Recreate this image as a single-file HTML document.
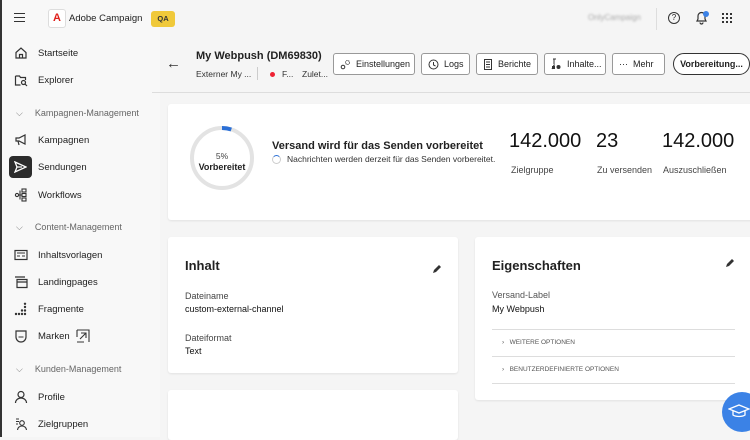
<!DOCTYPE html>
<html><head><meta charset="utf-8"><style>
*{box-sizing:border-box;margin:0;padding:0}
body{width:750px;height:437px;overflow:hidden;background:#f5f5f5;font-family:"Liberation Sans",sans-serif;color:#222;position:relative}
.abs{position:absolute;white-space:nowrap}
.side{left:0;top:0;width:160px;height:437px;background:#f8f8f8;border-left:2px solid #333}
.nav{position:absolute;left:14px;font-size:9.5px;color:#222;display:flex;align-items:center;white-space:nowrap}
.nav svg{width:14px;height:14px;margin-right:10px}
.sec{position:absolute;left:16px;font-size:9px;color:#666;white-space:nowrap}
.sec span{margin-right:12px;color:#777}
.btn{position:absolute;top:53px;height:22px;border:1px solid #999;border-radius:3px;background:#fff;font-size:9px;display:flex;align-items:center;padding:0 6px;gap:5px;white-space:nowrap;overflow:hidden}
.btn svg{flex:none}
.card{position:absolute;background:#fff;border-radius:3px;box-shadow:0 1px 2px rgba(0,0,0,.08)}
.lbl{font-size:9px;color:#444}
.val{font-size:9px;color:#111}
</style></head><body>
<div class="abs side"></div>
<div class="abs" style="left:14px;top:13px;width:11px;height:9px;border-top:1.5px solid #333;border-bottom:1.5px solid #333"><div style="margin-top:2.5px;border-top:1.5px solid #333"></div></div>
<div class="abs" style="left:48px;top:9px;width:18px;height:19px;background:#fff;border:1px solid #ddd;border-radius:3px;color:#e0201b;font-weight:bold;font-size:11px;text-align:center;line-height:17px">A</div>
<div class="abs" style="left:69px;top:13px;font-size:9.5px;color:#222">Adobe Campaign</div>
<div class="abs" style="left:151px;top:11px;width:24px;height:16px;background:#f0c93a;border-radius:3px;font-size:7.5px;text-align:center;line-height:16px;font-weight:bold;color:#333">QA</div>
<div class="abs" style="left:588px;top:13px;font-size:8px;color:#aaa;filter:blur(1px)">OnlyCampaign</div>
<div class="abs" style="left:656px;top:8px;width:1px;height:22px;background:#ddd"></div>
<div class="abs" style="left:668px;top:12px;width:12px;height:12px;border:1.3px solid #333;border-radius:50%;font-size:8px;text-align:center;line-height:10px">?</div>
<svg class="abs" style="left:694px;top:10px" width="16" height="16" viewBox="0 0 16 16"><path d="M3 11h9l-1-2V6a3.5 3.5 0 0 0-7 0v3z M6 12.5a1.5 1.5 0 0 0 3 0" fill="none" stroke="#333" stroke-width="1.2"/><circle cx="12" cy="4" r="3" fill="#3b82e6"/></svg>
<svg class="abs" style="left:722px;top:13px" width="10" height="10"><g fill="#333"><rect x="0" y="0" width="2" height="2"/><rect x="4" y="0" width="2" height="2"/><rect x="8" y="0" width="2" height="2"/><rect x="0" y="4" width="2" height="2"/><rect x="4" y="4" width="2" height="2"/><rect x="8" y="4" width="2" height="2"/><rect x="0" y="8" width="2" height="2"/><rect x="4" y="8" width="2" height="2"/><rect x="8" y="8" width="2" height="2"/></g></svg>
<div class="nav" style="top:46px"><svg viewBox="0 0 14 14"><path d="M2 6.5L7 2l5 4.5V12H2z M5.5 12V8.5h3V12" fill="none" stroke="#333" stroke-width="1.2"/></svg>Startseite</div>
<div class="nav" style="top:73px"><svg viewBox="0 0 14 14"><path d="M1.5 3h4l1 1.5h5V7 M1.5 3v9h5" fill="none" stroke="#333" stroke-width="1.2"/><circle cx="9.5" cy="9.5" r="2" fill="none" stroke="#333" stroke-width="1.2"/><path d="M11 11l2 2" stroke="#333" stroke-width="1.2"/></svg>Explorer</div>
<div class="sec" style="top:108px"><span>⌵</span>Kampagnen-Management</div>
<div class="nav" style="top:133px"><svg viewBox="0 0 14 14"><path d="M2 5h3l6-3v9L5 8H2z M4 8l1 4" fill="none" stroke="#333" stroke-width="1.2"/></svg>Kampagnen</div>
<div class="abs" style="left:9px;top:156px;width:23px;height:22px;background:#2c2c2c;border-radius:4px"></div>
<svg class="abs" style="left:14px;top:161px" width="13" height="12" viewBox="0 0 13 12"><path d="M1 1l11 5-11 5 2-5z M3 6h5" fill="none" stroke="#fff" stroke-width="1.3"/></svg>
<div class="abs" style="left:38px;top:162px;font-size:9.5px">Sendungen</div>
<div class="nav" style="top:188px"><svg viewBox="0 0 14 14"><g fill="none" stroke="#333" stroke-width="1.1"><circle cx="3" cy="7" r="1.6"/><rect x="8" y="1" width="4" height="3"/><rect x="8" y="5.5" width="4" height="3"/><rect x="8" y="10" width="4" height="3"/><path d="M4.6 7H8 M6 2.5v9"/></g></svg>Workflows</div>
<div class="sec" style="top:222px"><span>⌵</span>Content-Management</div>
<div class="nav" style="top:248px"><svg viewBox="0 0 14 14"><rect x="1" y="2.5" width="12" height="9" fill="none" stroke="#333" stroke-width="1.2"/><path d="M3 5h8 M3 8h3 M8 8h3" stroke="#333"/></svg>Inhaltsvorlagen</div>
<div class="nav" style="top:275px"><svg viewBox="0 0 14 14"><path d="M1 2h10 M3 4.5h10v8H3z M3 7h10" fill="none" stroke="#333" stroke-width="1.2"/></svg>Landingpages</div>
<div class="nav" style="top:302px"><svg viewBox="0 0 14 14"><g fill="#333"><circle cx="2" cy="12" r="1.2"/><circle cx="5" cy="12" r="1.2"/><circle cx="8" cy="12" r="1.2"/><circle cx="11" cy="12" r="1.2"/><circle cx="8" cy="8.5" r="1.2"/><circle cx="11" cy="8.5" r="1.2"/><circle cx="11" cy="5" r="1.2"/><circle cx="11" cy="1.8" r="1.2"/></g></svg>Fragmente</div>
<div class="nav" style="top:329px"><svg viewBox="0 0 14 14"><path d="M2 2h10v6a5 5 0 0 1-10 0z" fill="none" stroke="#333" stroke-width="1.2"/><path d="M4.5 8h5" stroke="#333"/></svg>Marken<svg viewBox="0 0 14 14" style="margin-left:6px"><path d="M1 1h12v12 M1 1v7 M1 13h7 M4 10l6-6 M5 4h5v5" fill="none" stroke="#333" stroke-width="1.1"/></svg></div>
<div class="sec" style="top:364px"><span>⌵</span>Kunden-Management</div>
<div class="nav" style="top:390px"><svg viewBox="0 0 14 14"><circle cx="7" cy="4.5" r="3" fill="none" stroke="#333" stroke-width="1.2"/><path d="M1.5 13a5.5 5 0 0 1 11 0" fill="none" stroke="#333" stroke-width="1.2"/></svg>Profile</div>
<div class="nav" style="top:417px"><svg viewBox="0 0 14 14"><g fill="none" stroke="#333" stroke-width="1.1"><circle cx="8" cy="6" r="2.3"/><path d="M3.5 13a4.5 4 0 0 1 9 0 M2 2h3 M2 4.5h3 M2 7h2"/></g></svg>Zielgruppen</div>
<!-- header -->
<div class="abs" style="left:166px;top:55px;font-size:15px;color:#333">←</div>
<div class="abs" style="left:196px;top:50px;font-size:11px;font-weight:bold;color:#222">My Webpush (DM69830)</div>
<div class="abs" style="left:196px;top:69px;font-size:8.5px;color:#333">Externer My ...</div>
<div class="abs" style="left:257px;top:67px;width:1px;height:13px;background:#ccc"></div>
<div class="abs" style="left:270px;top:72px;width:5px;height:5px;border-radius:50%;background:#e23"></div>
<div class="abs" style="left:282px;top:69px;font-size:8.5px;color:#333">F...</div>
<div class="abs" style="left:302px;top:69px;font-size:8.5px;color:#333">Zulet...</div>
<div class="btn" style="left:333px;width:82px"><svg width="11" height="11" viewBox="0 0 11 11"><circle cx="3" cy="8" r="1.8" fill="none" stroke="#333"/><circle cx="7.5" cy="3.5" r="2" fill="none" stroke="#333" stroke-dasharray="1.2 0.8"/></svg>Einstellungen</div>
<div class="btn" style="left:421px;width:49px"><svg width="11" height="11" viewBox="0 0 11 11"><circle cx="5.5" cy="5.5" r="4.5" fill="none" stroke="#333"/><path d="M5.5 3v3l2 1" fill="none" stroke="#333"/></svg>Logs</div>
<div class="btn" style="left:476px;width:62px"><svg width="10" height="11" viewBox="0 0 10 11"><rect x="1.5" y="0.5" width="7" height="10" fill="none" stroke="#333"/><path d="M3 3h4 M3 5.5h4 M3 8h4" stroke="#333"/></svg>Berichte</div>
<div class="btn" style="left:544px;width:62px"><svg width="11" height="12" viewBox="0 0 11 12"><path d="M2 1h3 M3 1v5 M1 11l2-4h1" fill="none" stroke="#333"/><circle cx="7.5" cy="9" r="2" fill="#333"/><rect x="1" y="8" width="3" height="3" fill="#333"/></svg>Inhalte...</div>
<div class="btn" style="left:612px;width:53px">··· &nbsp;Mehr</div>
<div class="btn" style="left:673px;width:77px;border:1.5px solid #333;border-radius:11px;font-weight:bold;color:#222;justify-content:center;padding:0 3px">Vorbereitung...</div>
<div class="abs" style="left:152px;top:92px;width:598px;height:1px;background:#ddd"></div>
<!-- stats card -->
<div class="card" style="left:168px;top:104px;width:590px;height:116px"></div>
<svg class="abs" style="left:189px;top:125px" width="66" height="66" viewBox="0 0 66 66"><circle cx="33" cy="33" r="30" fill="none" stroke="#e3e3e3" stroke-width="4"/><path d="M33 3a30 30 0 0 1 9.3 1.5" fill="none" stroke="#2a6fd6" stroke-width="4"/></svg>
<div class="abs" style="left:189px;top:151px;width:66px;text-align:center;font-size:8.5px;color:#444">5%</div>
<div class="abs" style="left:189px;top:162px;width:66px;text-align:center;font-size:9px;font-weight:bold;color:#222">Vorbereitet</div>
<div class="abs" style="left:272px;top:140px;font-size:11px;font-weight:bold;color:#222">Versand wird für das Senden vorbereitet</div>
<div class="abs" style="left:272px;top:155px;width:9px;height:9px;border:1.3px solid #ccc;border-top-color:#2a6fd6;border-radius:50%"></div>
<div class="abs" style="left:287px;top:154px;font-size:8.5px;color:#333">Nachrichten werden derzeit für das Senden vorbereitet.</div>
<div class="abs" style="left:509px;top:130px;font-size:20px;color:#111">142.000</div>
<div class="abs" style="left:596px;top:130px;font-size:20px;color:#111">23</div>
<div class="abs" style="left:662px;top:130px;font-size:20px;color:#111">142.000</div>
<div class="abs lbl" style="left:511px;top:165px">Zielgruppe</div>
<div class="abs lbl" style="left:597px;top:165px">Zu versenden</div>
<div class="abs lbl" style="left:663px;top:165px">Auszuschließen</div>
<!-- Inhalt card -->
<div class="card" style="left:168px;top:237px;width:290px;height:136px"></div>
<div class="abs" style="left:185px;top:258px;font-size:13px;font-weight:bold;color:#222">Inhalt</div>
<svg class="abs" style="left:432px;top:264px" width="10" height="10" viewBox="0 0 10 10"><path d="M1 9l1-3 5-5 2 2-5 5z" fill="#333"/></svg>
<div class="abs lbl" style="left:185px;top:291px">Dateiname</div>
<div class="abs val" style="left:185px;top:304px">custom-external-channel</div>
<div class="abs lbl" style="left:185px;top:333px">Dateiformat</div>
<div class="abs val" style="left:185px;top:346px">Text</div>
<div class="card" style="left:168px;top:390px;width:290px;height:50px"></div>
<!-- Eigenschaften -->
<div class="card" style="left:475px;top:237px;width:283px;height:163px"></div>
<div class="abs" style="left:492px;top:258px;font-size:13px;font-weight:bold;color:#222">Eigenschaften</div>
<svg class="abs" style="left:725px;top:258px" width="10" height="10" viewBox="0 0 10 10"><path d="M1 9l1-3 5-5 2 2-5 5z" fill="#333"/></svg>
<div class="abs lbl" style="left:492px;top:290px;color:#555">Versand-Label</div>
<div class="abs val" style="left:492px;top:304px">My Webpush</div>
<div class="abs" style="left:492px;top:329px;width:243px;height:1px;background:#ddd"></div>
<div class="abs" style="left:502px;top:339px;font-size:6.5px;color:#555">›&nbsp;&nbsp;&nbsp;WEITERE OPTIONEN</div>
<div class="abs" style="left:492px;top:356px;width:243px;height:1px;background:#ddd"></div>
<div class="abs" style="left:502px;top:366px;font-size:6.5px;color:#555">›&nbsp;&nbsp;&nbsp;BENUTZERDEFINIERTE OPTIONEN</div>
<div class="abs" style="left:492px;top:383px;width:243px;height:1px;background:#ddd"></div>
<div class="abs" style="left:722px;top:392px;width:40px;height:40px;border-radius:50%;background:#3b82e6"></div>
<svg class="abs" style="left:728px;top:403px" width="22" height="16" viewBox="0 0 22 16"><path d="M1 6l10-4 10 4-10 4z M5 8v4c3 2 9 2 12 0V8" fill="none" stroke="#fff" stroke-width="1.3"/></svg>
</body></html>
